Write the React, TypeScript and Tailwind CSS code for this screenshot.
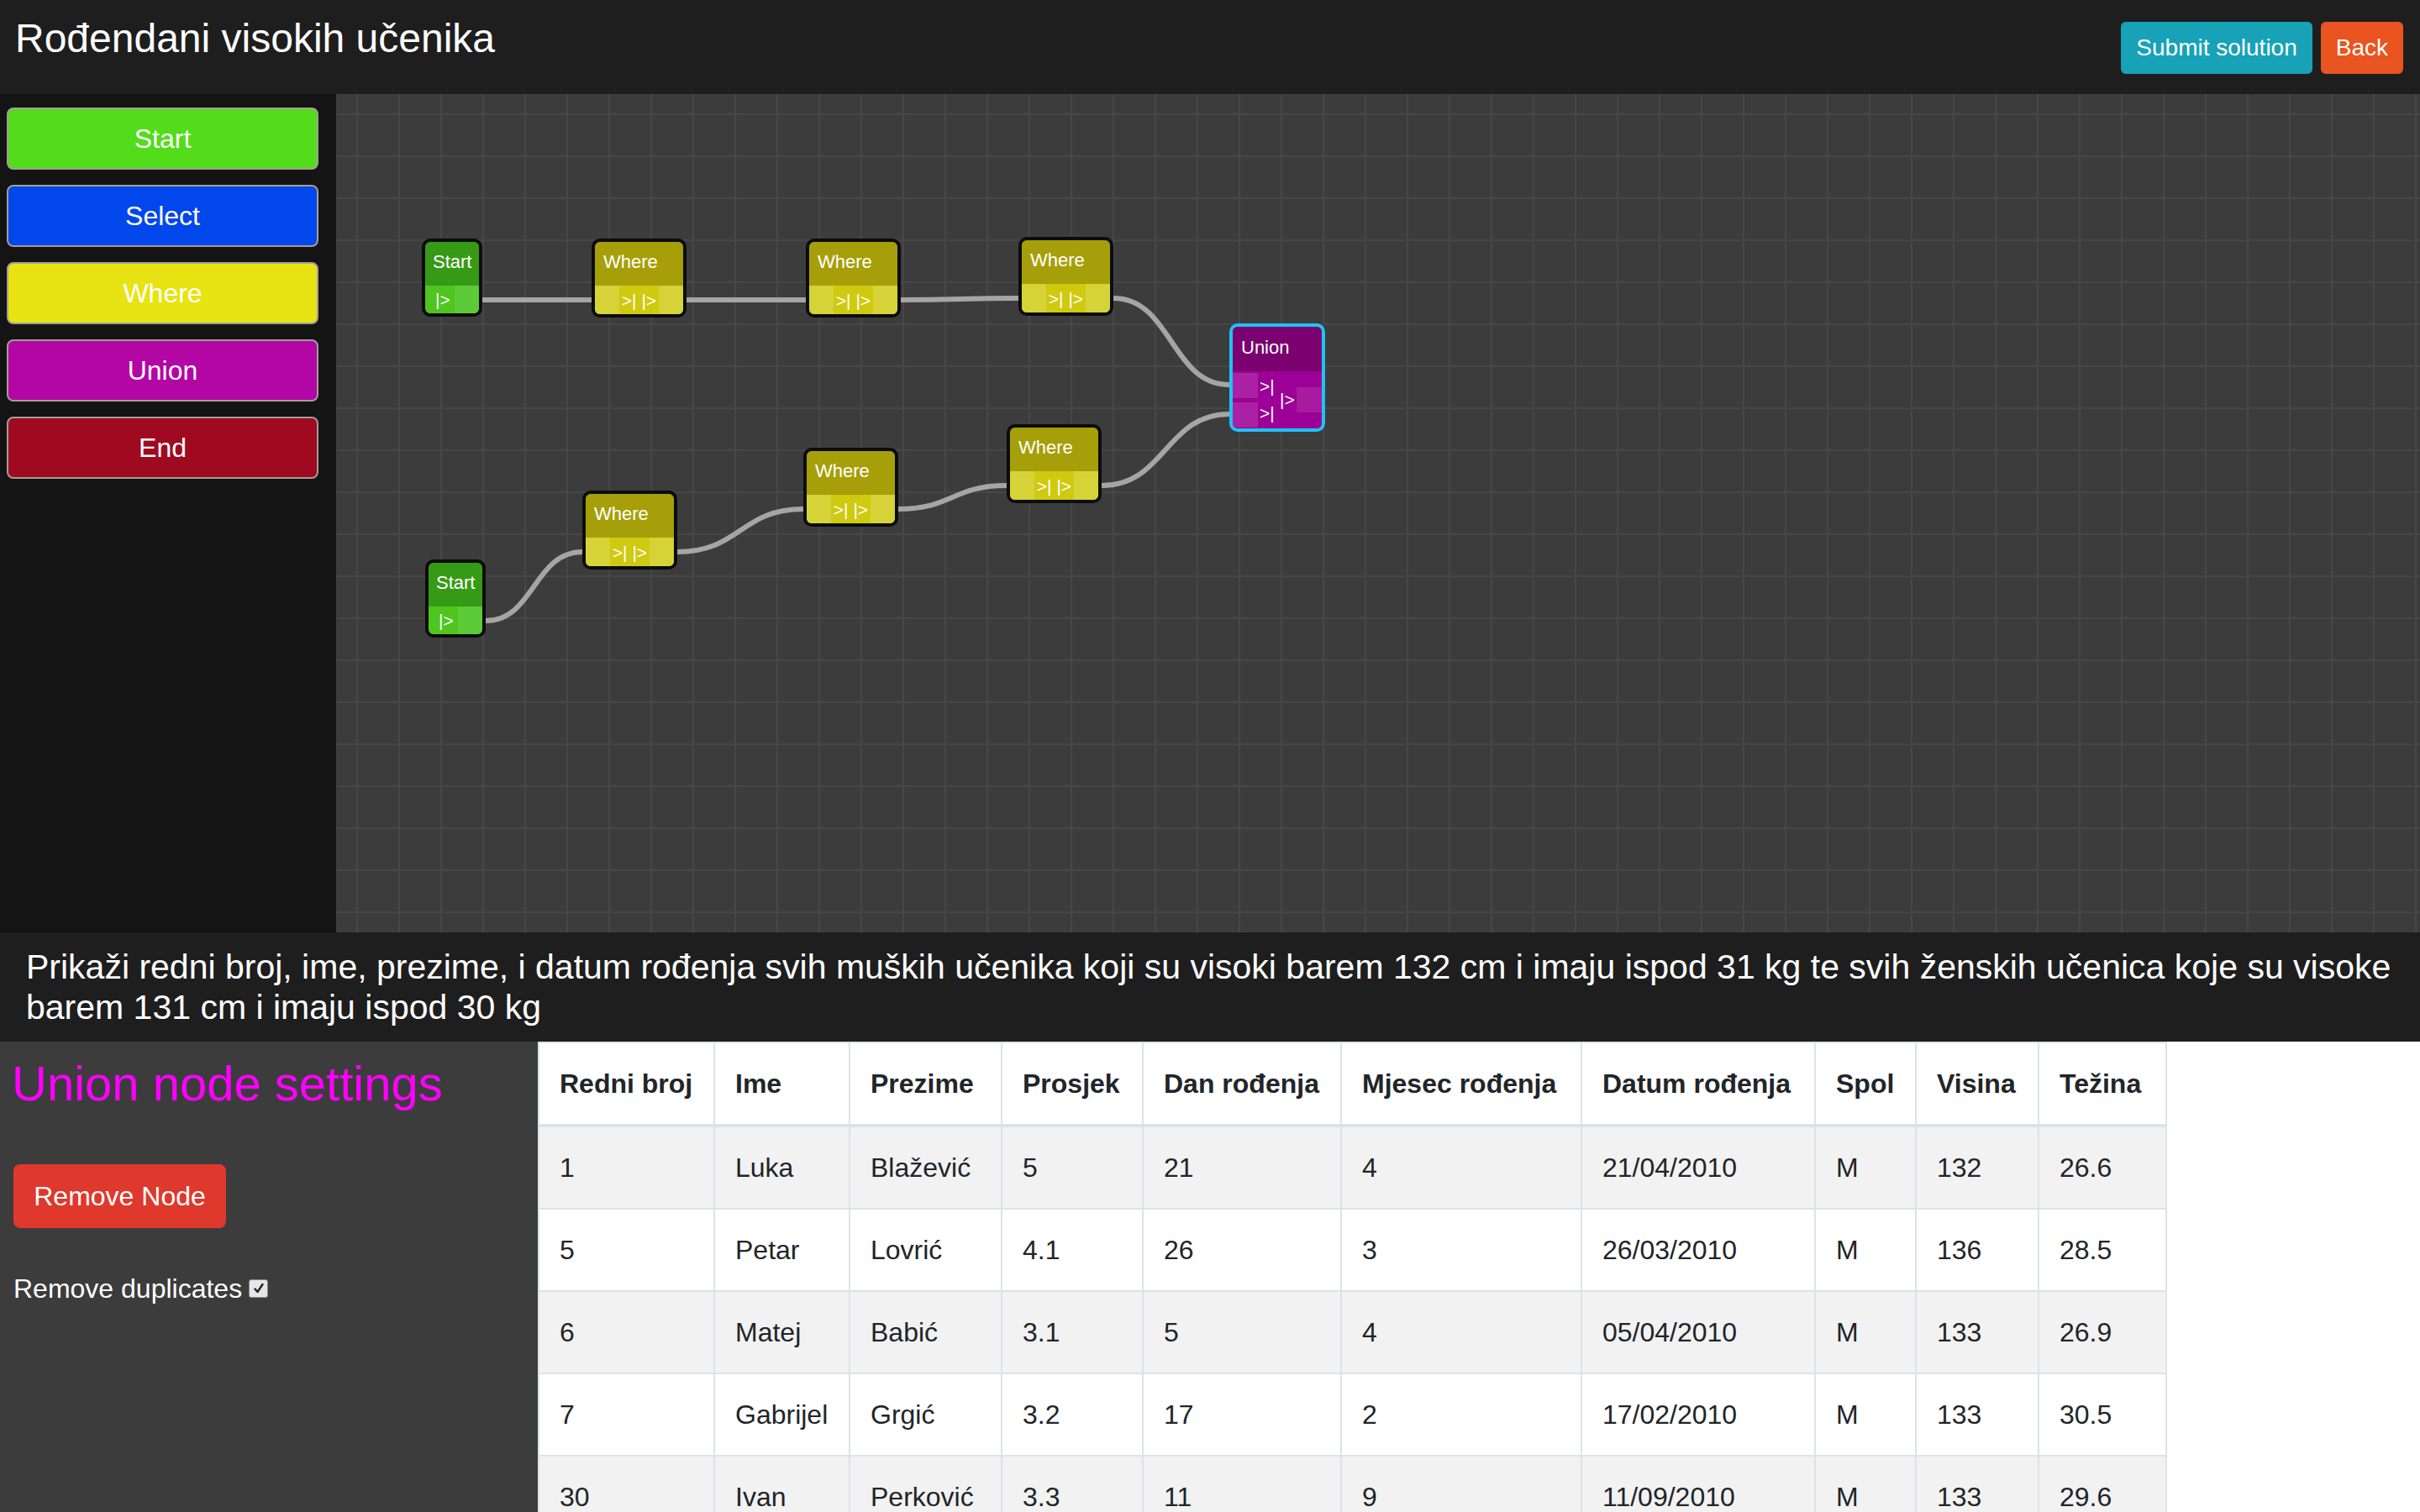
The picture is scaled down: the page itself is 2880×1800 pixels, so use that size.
import React from "react";

type NodeKind = "start" | "where" | "union";
interface NodeDef {
  id: string;
  kind: NodeKind;
  x: number;
  y: number;
}

const nodes: NodeDef[] = [
  { id: "s1", kind: "start", x: 102, y: 172 },
  { id: "w1", kind: "where", x: 304, y: 172 },
  { id: "w2", kind: "where", x: 559, y: 172 },
  { id: "w3", kind: "where", x: 812, y: 170 },
  { id: "u", kind: "union", x: 1063, y: 273 },
  { id: "s2", kind: "start", x: 106, y: 554 },
  { id: "w4", kind: "where", x: 293, y: 472 },
  { id: "w5", kind: "where", x: 556, y: 421 },
  { id: "w6", kind: "where", x: 798, y: 393 },
];

const edges: [number, number, number, number][] = [
  [174, 245, 304, 245],
  [417, 245, 559, 245],
  [672, 245, 812, 243],
  [925, 243, 1063, 346],
  [178, 627, 293, 545],
  [406, 545, 556, 494],
  [669, 494, 798, 466],
  [911, 466, 1063, 381],
];

function edgePath([x1, y1, x2, y2]: [number, number, number, number]) {
  const d = (x2 - x1) * 0.5;
  return `M ${x1} ${y1} C ${x1 + d} ${y1}, ${x2 - d} ${y2}, ${x2} ${y2}`;
}

function StartNode({ x, y }: { x: number; y: number }) {
  return (
    <div
      className="absolute w-[72px] h-[93px] rounded-[10px] border-4 border-[#0c0c0c] overflow-hidden flex flex-col"
      style={{ left: x, top: y }}
    >
      <div className="h-[52px] bg-[#379a16] pl-[9px] pt-[11px] text-[22px] leading-[26px] text-white">Start</div>
      <div className="flex-1 flex bg-[#4ec61f]">
        <div className="flex-1 flex items-center pl-[12px] text-[21px] text-white leading-none">|&gt;</div>
        <div className="w-[29px] bg-[#5ccb37]" />
      </div>
    </div>
  );
}

function WhereNode({ x, y }: { x: number; y: number }) {
  return (
    <div
      className="absolute w-[113px] h-[94px] rounded-[10px] border-4 border-[#0c0c0c] overflow-hidden flex flex-col"
      style={{ left: x, top: y }}
    >
      <div className="h-[52px] bg-[#a69f0a] pl-[10px] pt-[11px] text-[22px] leading-[26px] text-white">Where</div>
      <div className="flex-1 flex bg-[#d4d02a]">
        <div className="w-[29px] bg-[#d6d338]" />
        <div className="flex-1 bg-[#cfca10] flex items-center justify-center text-[21px] text-white leading-none whitespace-nowrap">
          &gt;| |&gt;
        </div>
        <div className="w-[29px] bg-[#d6d338]" />
      </div>
    </div>
  );
}

function UnionNode({ x, y }: { x: number; y: number }) {
  return (
    <div
      className="absolute w-[114px] h-[129px] rounded-[10px] border-4 border-[#1ec3f3] overflow-hidden flex flex-col"
      style={{ left: x, top: y }}
    >
      <div className="h-[53px] bg-[#7b0070] pl-[10px] pt-[12px] text-[22px] leading-[26px] text-white">Union</div>
      <div className="flex-1 flex bg-[#9c0096]">
        <div className="w-[30px] flex flex-col gap-[5px] pt-[2px]">
          <div className="h-[30px] bg-[#aa22a3]" />
          <div className="h-[30px] bg-[#aa22a3]" />
        </div>
        <div className="w-[24px] flex flex-col pt-[2px] pl-[2px] text-[21px] text-white">
          <div className="h-[30px] flex items-center leading-none">&gt;|</div>
          <div className="h-[35px] flex items-center leading-none">&gt;|</div>
        </div>
        <div className="flex-1 flex items-center pl-[2px] pb-[2px] text-[21px] text-white leading-none">|&gt;</div>
        <div className="w-[30px] flex items-center">
          <div className="h-[30px] w-[30px] bg-[#a61c9f]" />
        </div>
      </div>
    </div>
  );
}

const rows = [
  ["1", "Luka", "Blažević", "5", "21", "4", "21/04/2010", "M", "132", "26.6"],
  ["5", "Petar", "Lovrić", "4.1", "26", "3", "26/03/2010", "M", "136", "28.5"],
  ["6", "Matej", "Babić", "3.1", "5", "4", "05/04/2010", "M", "133", "26.9"],
  ["7", "Gabrijel", "Grgić", "3.2", "17", "2", "17/02/2010", "M", "133", "30.5"],
  ["30", "Ivan", "Perković", "3.3", "11", "9", "11/09/2010", "M", "133", "29.6"],
];

const headers = [
  { t: "Redni broj", w: "w-[209px]" },
  { t: "Ime", w: "w-[161px]" },
  { t: "Prezime", w: "w-[181px]" },
  { t: "Prosjek", w: "w-[168px]" },
  { t: "Dan rođenja", w: "w-[236px]" },
  { t: "Mjesec rođenja", w: "w-[286px]" },
  { t: "Datum rođenja", w: "w-[278px]" },
  { t: "Spol", w: "w-[120px]" },
  { t: "Visina", w: "w-[146px]" },
  { t: "Težina", w: "w-[152px]" },
];

const palette = [
  { t: "Start", c: "bg-[#52dc1a]" },
  { t: "Select", c: "bg-[#0247eb]" },
  { t: "Where", c: "bg-[#e8e312]" },
  { t: "Union", c: "bg-[#b306a4]" },
  { t: "End", c: "bg-[#a00a20]" },
];

export default function App() {
  return (
    <div className="h-screen w-screen overflow-hidden flex flex-col bg-white font-['Liberation_Sans',Arial,sans-serif]">
      {/* Header */}
      <div className="h-[112px] shrink-0 bg-[#1e1e1e] flex justify-between items-start pl-[18px] pr-[20px]">
        <div className="mt-[18px] text-[48px] leading-[56px] text-white">Rođendani visokih učenika</div>
        <div className="mt-[26px] flex gap-[10px]">
          <button className="h-[62px] px-[18px] rounded-[6px] bg-[#17a2b8] text-white text-[28px] leading-none">
            Submit solution
          </button>
          <button className="h-[62px] px-[18px] rounded-[6px] bg-[#e95420] text-white text-[28px] leading-none">
            Back
          </button>
        </div>
      </div>

      {/* Editor */}
      <div className="h-[998px] shrink-0 flex">
        <div className="w-[400px] shrink-0 bg-[#141414] pt-[16px] pl-[8px] flex flex-col gap-[18px]">
          {palette.map((p) => (
            <div
              key={p.t}
              className={`w-[371px] h-[74px] rounded-[8px] border-2 border-[#a39e97] ${p.c} flex items-center justify-center text-white text-[32px]`}
            >
              {p.t}
            </div>
          ))}
        </div>
        <div className="relative flex-1 overflow-hidden bg-[#3c3c3c] bg-[linear-gradient(to_right,#474747_2px,transparent_2px),linear-gradient(to_bottom,#474747_2px,transparent_2px)] bg-[size:50px_50px] bg-[position:24px_23px]">
          <svg className="absolute inset-0 w-full h-full pointer-events-none">
            {edges.map((e, i) => (
              <path key={i} d={edgePath(e)} fill="none" stroke="#a5a5a5" strokeWidth={6} />
            ))}
          </svg>
          {nodes.map((n) =>
            n.kind === "start" ? (
              <StartNode key={n.id} x={n.x} y={n.y} />
            ) : n.kind === "where" ? (
              <WhereNode key={n.id} x={n.x} y={n.y} />
            ) : (
              <UnionNode key={n.id} x={n.x} y={n.y} />
            )
          )}
        </div>
      </div>

      {/* Task description */}
      <div className="h-[130px] shrink-0 bg-[#1e1e1e] pl-[31px] pt-[17px] text-white text-[41px] leading-[48px] whitespace-nowrap">
        Prikaži redni broj, ime, prezime, i datum rođenja svih muških učenika koji su visoki barem 132 cm i imaju ispod 31 kg te svih ženskih učenica koje su visoke
        <br />
        barem 131 cm i imaju ispod 30 kg
      </div>

      {/* Bottom */}
      <div className="flex-1 flex min-h-0">
        <div className="w-[640px] shrink-0 bg-[#3c3c3c] pl-[14px] pt-[16px]">
          <div className="text-[58px] leading-[68px] text-[#ff00ff]">Union node settings</div>
          <button className="mt-[62px] ml-[2px] h-[76px] w-[253px] rounded-[8px] bg-[#df382c] text-white text-[32px] leading-none">
            Remove Node
          </button>
          <div className="mt-[48px] ml-[2px] flex items-center gap-[8px] text-white text-[32px] leading-[48px]">
            <span>Remove duplicates</span>
            <span className="w-[23px] h-[22px] rounded-[3px] border border-[#8a8a8a] bg-[#e6e6e6] flex items-center justify-center">
              <svg viewBox="0 0 16 16" className="w-[16px] h-[16px]">
                <path d="M3.5 8.5 L6.5 12 L12.5 3" fill="none" stroke="#222" strokeWidth={2.4} strokeLinecap="round" strokeLinejoin="round" />
              </svg>
            </span>
          </div>
        </div>
        <div className="flex-1 bg-white">
          <table className="table-fixed border-collapse w-[1937px] text-[#212529] text-[32px] leading-[48px]">
            <thead>
              <tr>
                {headers.map((h) => (
                  <th
                    key={h.t}
                    className={`${h.w} border-2 border-b-4 border-[#dee2e6] px-[24px] py-[24px] text-left font-bold whitespace-nowrap`}
                  >
                    {h.t}
                  </th>
                ))}
              </tr>
            </thead>
            <tbody>
              {rows.map((r, i) => (
                <tr key={i} className={i % 2 === 0 ? "bg-[#f2f2f2]" : "bg-white"}>
                  {r.map((c, j) => (
                    <td key={j} className="border-2 border-[#dee2e6] px-[24px] py-[24px] whitespace-nowrap">
                      {c}
                    </td>
                  ))}
                </tr>
              ))}
            </tbody>
          </table>
        </div>
      </div>
    </div>
  );
}
